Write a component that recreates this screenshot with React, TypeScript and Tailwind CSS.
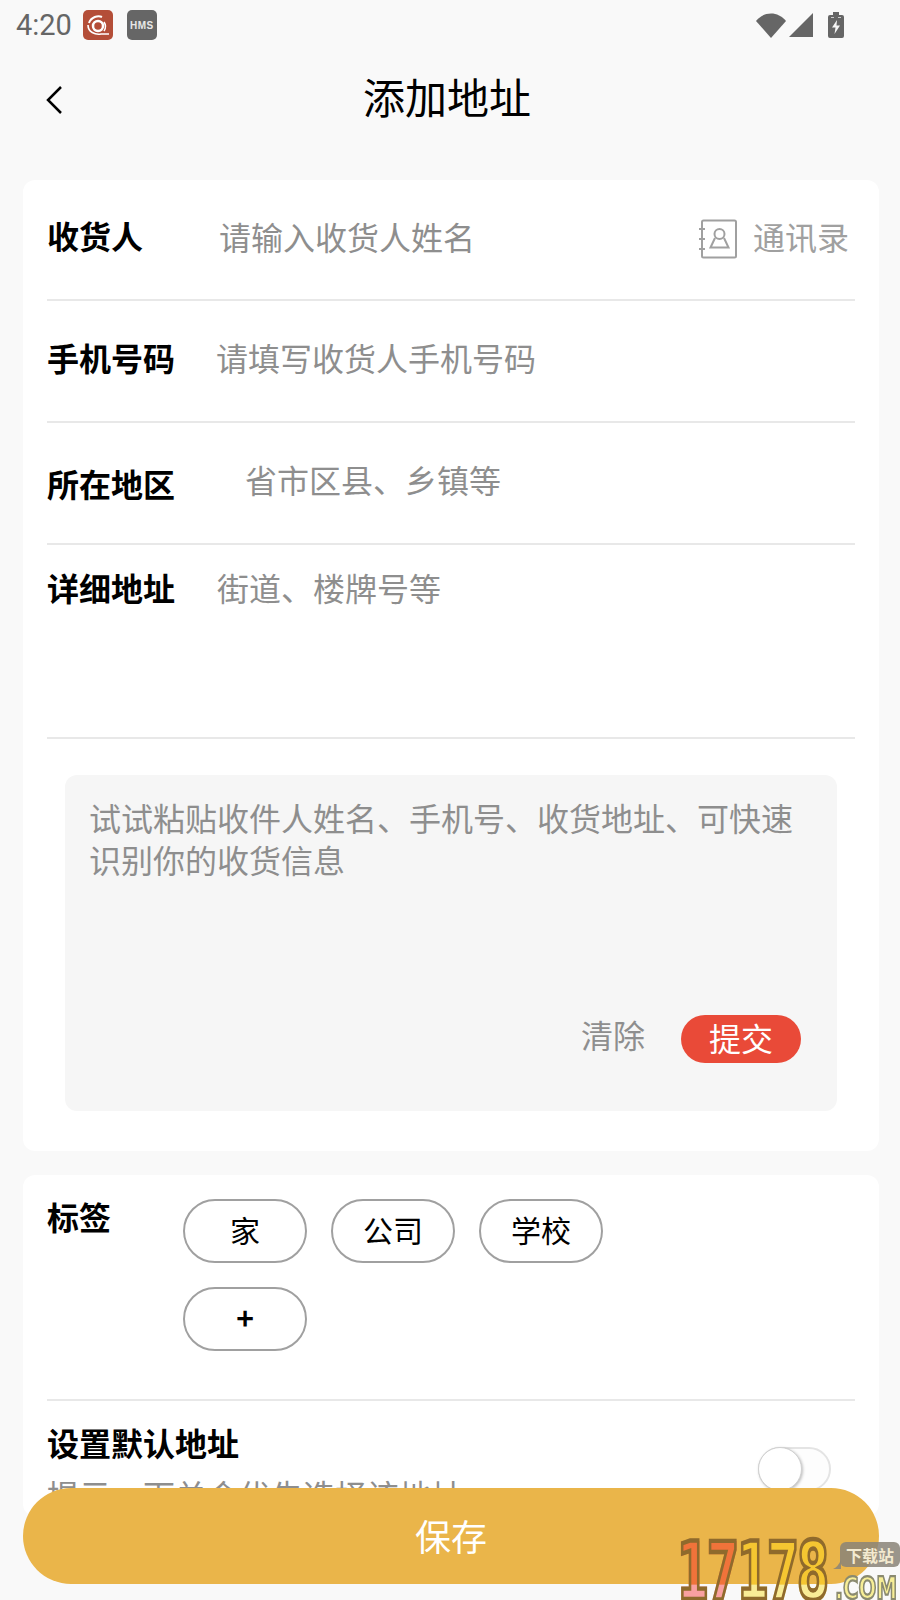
import React from "react";

const cjk = "font-['Noto_Sans_CJK_SC','Noto_Sans',sans-serif]";

function Row({ label, placeholder, labelW, labelPt, phPt, h, right }: { label: string; placeholder: string; labelW: string; labelPt: string; phPt: string; h: string; right?: React.ReactNode }) {
  return (
    <div className={`flex items-start ${h} border-b-2 border-[#e8e8e8]`}>
      <div className={`${labelW} ${labelPt} shrink-0 text-[32px] leading-[44px] font-bold text-black`}>{label}</div>
      <div className={`${phPt} flex-1 text-[32px] leading-[44px] text-[#8e8e8e]`}>{placeholder}</div>
      {right}
    </div>
  );
}

function Tag({ children }: { children: React.ReactNode }) {
  return (
    <div className="flex h-[64px] w-[124px] items-center justify-center rounded-full border-2 border-[#a0a0a0] pb-[3px] text-[30px] text-black">{children}</div>
  );
}

export default function App() {
  return (
    <div className={`${cjk} relative h-[1600px] w-[900px] overflow-hidden bg-[#f9f9f9]`}>
      {/* status bar */}
      <div className="flex h-[50px] items-center pl-[16px] pr-[56px]">
        <span className="font-['Roboto',sans-serif] text-[29px] leading-[50px] text-[#666666]">4:20</span>
        <div className="ml-[11px] flex h-[30px] w-[30px] items-center justify-center rounded-[5px] bg-[#b44e38]">
          <svg width="26" height="26" viewBox="0 0 26 26" fill="none" stroke="#fff">
            <path d="M4 11c2-6 9-8 13-6" strokeWidth="2" />
            <circle cx="13" cy="14" r="5" strokeWidth="2.500" />
            <path d="M3 13c0 7 7 10 13 9l8 0" strokeWidth="1.600" />
            <path d="M19 10c2 3 2 6 0 9" strokeWidth="1.600" />
          </svg>
        </div>
        <div className="ml-[14px] flex h-[30px] w-[30px] items-center justify-center rounded-[5px] bg-[#666666] font-['Liberation_Sans',sans-serif] text-[10px] font-bold tracking-[0.5px] text-[#e8e8e8]">HMS</div>
        <div className="ml-auto flex items-center">
          <svg width="30" height="25" viewBox="0 0 30 25"><path d="M0 8C8 -2 22 -2 30 8L15 25Z" fill="#666666" /></svg>
          <svg className="ml-[3px]" width="24" height="24" viewBox="0 0 24 24"><path d="M24 0V24H0Z" fill="#666666" /></svg>
          <svg className="ml-[15px]" width="16" height="26" viewBox="0 0 16 26">
            <path d="M5 0H11V3H14Q16 3 16 5V24Q16 26 14 26H2Q0 26 0 24V5Q0 3 2 3H5Z" fill="#666666" />
            <path d="M9 8L4 15.500H7.500L6.500 22L12 13.500H8.500Z" fill="#f5f5f5" />
            <path d="M3 5.500H6M10 5.500H13" stroke="#cccccc" strokeWidth="1" />
          </svg>
        </div>
      </div>

      {/* header */}
      <div className="relative flex h-[100px] items-center justify-center pb-[8px] pr-[6px]">
        <svg className="absolute left-[44px] top-[33px]" width="22" height="32" viewBox="0 0 22 32" fill="none">
          <path d="M17 4L4 17L17 30" stroke="#000" strokeWidth="2.500" />
        </svg>
        <h1 className="text-[42px] leading-[56px] font-normal text-black">添加地址</h1>
      </div>

      <div className="mt-[30px] ml-[23px] flex w-[856px] flex-col gap-[24px]">
        {/* card 1 */}
        <div className="rounded-[12px] bg-white px-[24px] pb-[40px]">
          <Row
            label="收货人"
            placeholder="请输入收货人姓名"
            labelW="w-[172px]"
            labelPt="pt-[33px]"
            phPt="pt-[34px]"
            h="h-[121px]"
            right={
              <div className="flex items-start pr-[6px] pt-[39px]">
                <svg width="38" height="40" viewBox="0 0 38 40" fill="none" stroke="#a0a0a0" strokeWidth="2">
                  <rect x="3" y="1.500" width="34" height="37" rx="1.500" />
                  <path d="M0 10H6M0 20H6M0 30H6" />
                  <circle cx="20.500" cy="15" r="5" />
                  <path d="M16 19L11.500 28.500H29.500L25 19" />
                </svg>
                <span className="ml-[16px] -mt-[5px] text-[32px] leading-[44px] text-[#a0a0a0]">通讯录</span>
              </div>
            }
          />
          <Row label="手机号码" placeholder="请填写收货人手机号码" labelW="w-[169px]" labelPt="pt-[34px]" phPt="pt-[34px]" h="h-[122px]" />
          <Row label="所在地区" placeholder="省市区县、乡镇等" labelW="w-[198px]" labelPt="pt-[38px]" phPt="pt-[34px]" h="h-[122px]" />
          <Row label="详细地址" placeholder="街道、楼牌号等" labelW="w-[170px]" labelPt="pt-[20px]" phPt="pt-[20px]" h="h-[194px]" />
          {/* paste box */}
          <div className="mx-[18px] mt-[36px] flex h-[336px] flex-col rounded-[12px] bg-[#f6f6f6] pl-[24px] pr-[25px] pt-[21px]">
            <p className="text-[32px] leading-[42px] text-[#8e8e8e]">试试粘贴收件人姓名、手机号、收货地址、可快速识别你的收货信息</p>
            <div className="mt-auto mb-[48px] flex items-start justify-end pr-[11px]">
              <span className="-mt-[3px] text-[32px] leading-[44px] text-[#8e8e8e]">清除</span>
              <span className="ml-[36px] flex h-[48px] w-[120px] items-center justify-center rounded-full bg-[#e94a38] pb-[5px] text-[32px] text-white">提交</span>
            </div>
          </div>
        </div>

        {/* card 2 */}
        <div className="rounded-[12px] bg-white px-[24px] pt-[24px]">
          <div className="flex h-[202px] items-start border-b-2 border-[#e8e8e8]">
            <div className="w-[136px] shrink-0 text-[32px] leading-[34px] font-bold text-black">标签</div>
            <div className="flex w-[424px] flex-wrap gap-x-[24px] gap-y-[24px]">
              <Tag>家</Tag>
              <Tag>公司</Tag>
              <Tag>学校</Tag>
              <Tag><span className="font-bold">+</span></Tag>
            </div>
          </div>
          <div className="flex items-start pt-[19px]">
            <div className="flex-1">
              <div className="text-[32px] leading-[44px] font-bold text-black">设置默认地址</div>
              <div className="mt-[8px] text-[32px] leading-[44px] text-[#8e8e8e]">提示：下单会优先选择该地址</div>
            </div>
            <div className="relative mr-[24px] mt-[27px] h-[44px] w-[73px] rounded-full border-2 border-[#e4e4e4] bg-[#fdfdfd]">
              <div className="absolute -left-[2px] -top-[2px] h-[44px] w-[44px] rounded-full border-[1.5px] border-[#d0d0d0] bg-white shadow-[1px_1px_3px_rgba(0,0,0,0.25)]" />
            </div>
          </div>
        </div>
      </div>

      {/* save */}
      <div className="absolute left-[23px] top-[1488px] flex h-[96px] w-[856px] items-center justify-center rounded-full bg-[#eab54a] pb-[2px] text-[36px] text-white">保存</div>

      {/* watermark */}
      <div className="absolute left-[677px] top-[1540px] h-[60px] w-[223px] font-['DejaVu_Sans',sans-serif]">
        <div className="absolute left-0 top-[1px] flex origin-top scale-y-[1.75] text-[46px] leading-[34px] font-bold tracking-[-2px] [-webkit-text-stroke:2.500px_#8f6a2c]">
          <span className="bg-[linear-gradient(#f0733a_0,#f0733a_25px,#f9a0a0_25px)] bg-clip-text text-transparent">17</span>
          <span className="bg-[linear-gradient(#f5c631_0,#f5c631_25px,#f9ec96_25px)] bg-clip-text text-transparent">178</span>
        </div>
        <div className="absolute left-[158px] top-[36px] origin-top scale-y-[1.5] text-[21px] leading-[16px] font-bold text-[#f7ee96] [-webkit-text-stroke:1.500px_#8a8a70]">.COM</div>
        <svg className="absolute left-[156px] top-[20px]" width="10" height="10" viewBox="0 0 10 10"><path d="M8 0V9H0Q5 7 8 0Z" fill="#8a8478" fillOpacity="0.85" /></svg>
        <div className={`${cjk} absolute left-[163px] top-[2px] flex h-[25px] w-[60px] items-center justify-center rounded-[6px] bg-[#8a8478]/85 text-[16px] font-bold text-[#f3ead0]`}>下载站</div>
      </div>
    </div>
  );
}
